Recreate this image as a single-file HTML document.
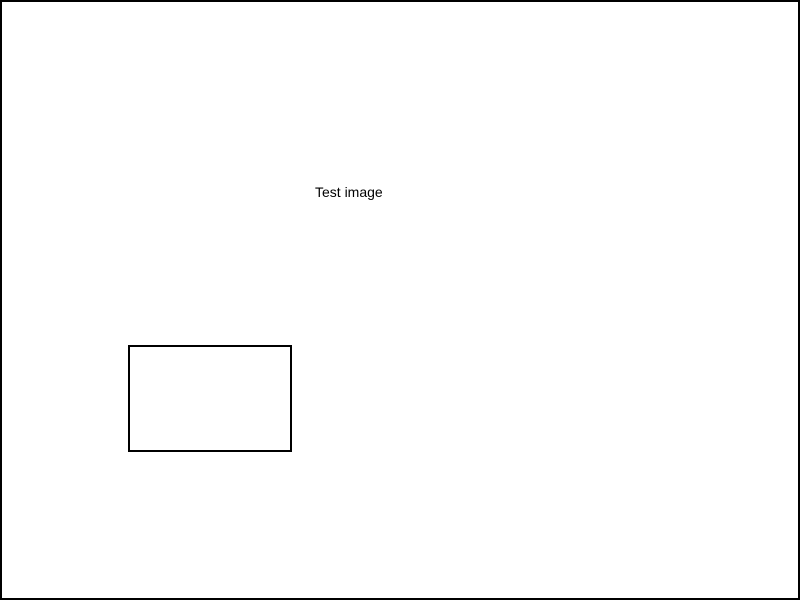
<!DOCTYPE html>
<html><head><style>
html,body{margin:0;padding:0;background:#fff;}
#page{position:relative;width:800px;height:600px;box-sizing:border-box;border:2px solid #000;overflow:hidden;}
#t{position:absolute;left:313px;top:182px;font:14px "Liberation Sans",sans-serif;color:#000;white-space:nowrap;}
#r{position:absolute;left:126px;top:343px;width:164px;height:107px;box-sizing:border-box;border:2px solid #000;}
</style></head><body>
<div id="page"><div id="t">Test image</div><div id="r"></div></div>
</body></html>
